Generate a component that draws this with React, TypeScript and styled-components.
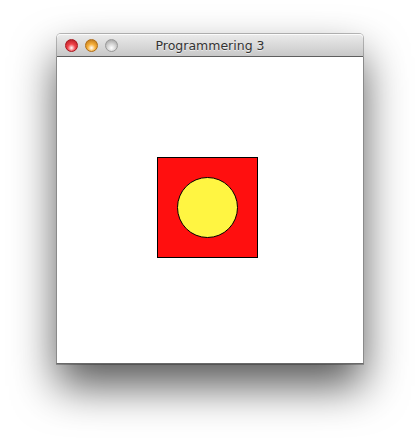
import styled, { createGlobalStyle } from "styled-components";

const GlobalStyle = createGlobalStyle`
  html, body {
    margin: 0;
    padding: 0;
    background: #ffffff;
  }
`

const Desktop = styled.div`
  width: 420px;
  height: 442px;
  padding: 34px 0 0 57px;
  box-sizing: border-box;
  overflow: hidden;
`

const Window = styled.div`
  width: 306px;
  display: flex;
  flex-direction: column;
  border-radius: 4px 4px 0 0;
  box-shadow: 0 0 0 1px rgba(0, 0, 0, 0.25), 0 22px 44px rgba(0, 0, 0, 0.66);
`

const TitleBar = styled.div`
  position: relative;
  height: 22px;
  display: flex;
  align-items: center;
  justify-content: center;
  border-radius: 4px 4px 0 0;
  border-bottom: 1px solid #5e5e5e;
  background: linear-gradient(180deg, #ebebeb 0%, #dadada 50%, #c8c8c8 100%);
  box-shadow: inset 0 1px 0 rgba(255, 255, 255, 0.8);
`

const Lights = styled.div`
  position: absolute;
  left: 8px;
  top: 5px;
  display: flex;
  gap: 7px;
`

const Light = styled.span<{ $base: string; $dark: string }>`
  width: 13px;
  height: 13px;
  border-radius: 50%;
  box-sizing: border-box;
  border: 1px solid ${p => p.$dark};
  background: radial-gradient(circle at 50% 72%, #ffffff 0%, ${p => p.$base} 40%, ${p => p.$dark} 100%);
`

const Title = styled.span`
  font-family: "DejaVu Sans", "Liberation Sans", sans-serif;
  font-size: 12.5px;
  color: #333333;
  text-shadow: 0 1px 0 rgba(255, 255, 255, 0.6);
`

const Content = styled.div`
  height: 306px;
  background: #ffffff;
  border-left: 1px solid #8a8a8a;
  border-right: 1px solid #8a8a8a;
  border-bottom: 1px solid #6a6a6a;
  margin: 0 -1px;
`

const Canvas = styled.svg`
  display: block;
`

function App() {
    return (
        <>
            <GlobalStyle />
            <Desktop>
                <Window>
                    <TitleBar>
                        <Lights>
                            <Light $base="#f2434a" $dark="#a8151c" />
                            <Light $base="#f7b03a" $dark="#b06c14" />
                            <Light $base="#d8d8d8" $dark="#989898" />
                        </Lights>
                        <Title>Programmering 3</Title>
                    </TitleBar>
                    <Content>
                        <Canvas width="306" height="306" viewBox="0 0 306 306">
                            <rect x="100.5" y="100.5" width="100" height="100" fill="#ff0f0f" stroke="#000" strokeWidth="1" />
                            <circle cx="150.5" cy="150.5" r="30" fill="#fff542" stroke="#000" strokeWidth="1" />
                        </Canvas>
                    </Content>
                </Window>
            </Desktop>
        </>
    );
}

export default App;
